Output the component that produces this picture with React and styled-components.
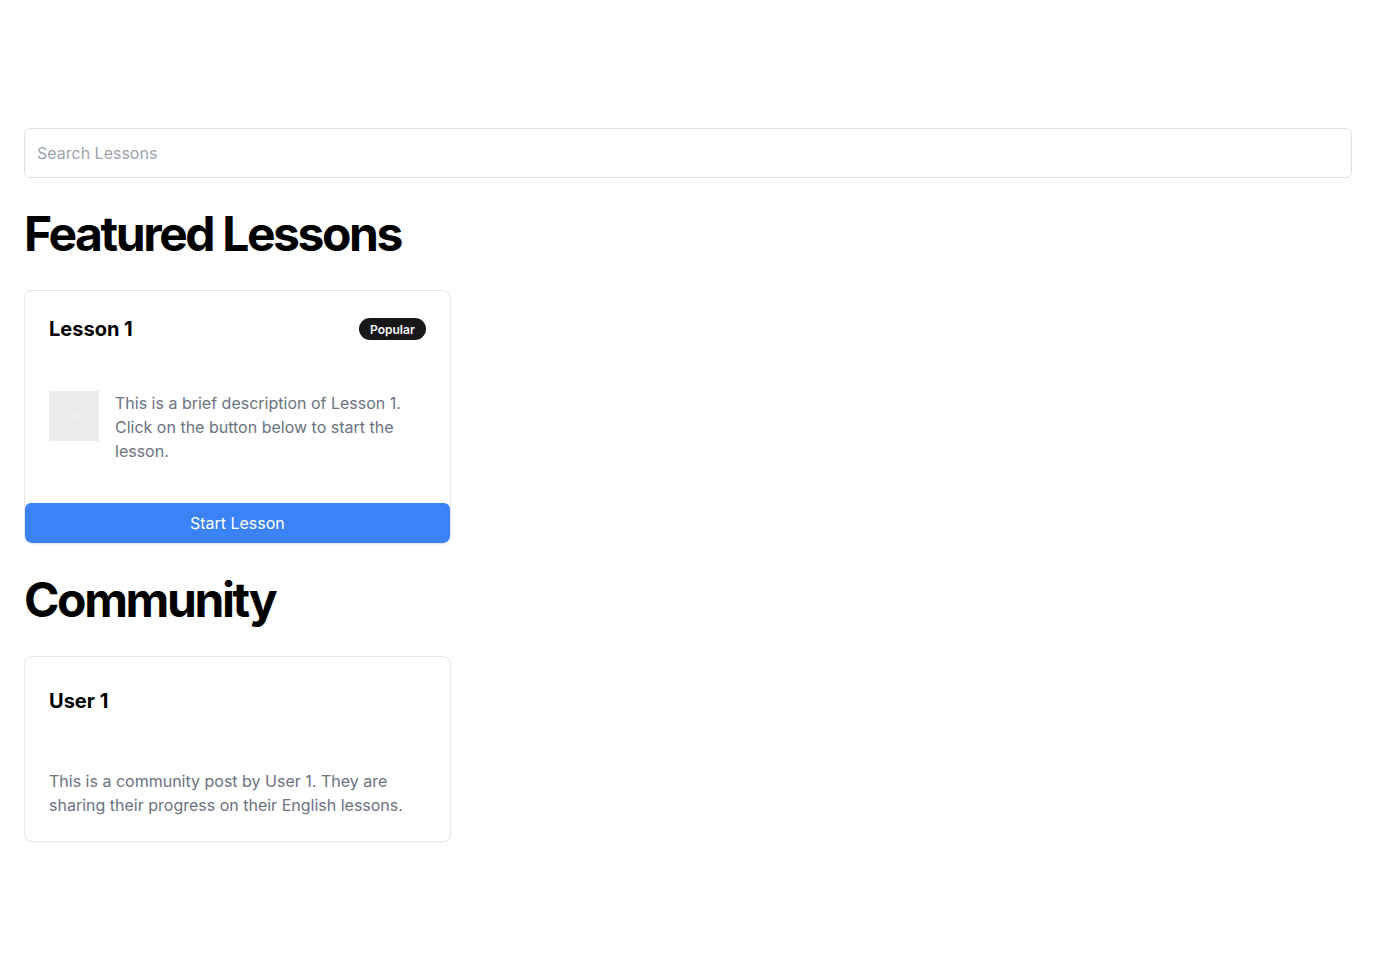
import React from "react";
import styled, { createGlobalStyle } from "styled-components";

const GlobalStyle = createGlobalStyle`
  * { box-sizing: border-box; }
  body {
    margin: 0;
    background: #ffffff;
    font-family: Inter, "Noto Sans", sans-serif;
    color: #09090b;
  }
`;

const lessons = [
  {
    title: "Lesson 1",
    badge: "Popular",
    text: "This is a brief description of Lesson 1. Click on the button below to start the lesson.",
  },
];

const posts = [
  {
    user: "User 1",
    text: "This is a community post by User 1. They are sharing their progress on their English lessons.",
  },
];

export default function App() {
  return (
    <>
      <GlobalStyle />
      <Page>
        <SearchInput placeholder="Search Lessons" />

        <Heading>Featured Lessons</Heading>
        <CardGrid>
          {lessons.map((lesson) => (
            <Card key={lesson.title}>
              <CardHeader>
                <TitleRow>
                  <CardTitle>{lesson.title}</CardTitle>
                  <Badge>{lesson.badge}</Badge>
                </TitleRow>
              </CardHeader>
              <CardContent>
                <LessonBody>
                  <Thumb />
                  <Description>{lesson.text}</Description>
                </LessonBody>
              </CardContent>
              <StartButton>Start Lesson</StartButton>
            </Card>
          ))}
        </CardGrid>

        <Heading>Community</Heading>
        <CardGrid>
          {posts.map((post) => (
            <Card key={post.user}>
              <CardHeader>
                <UserRow>
                  <CardTitle>{post.user}</CardTitle>
                </UserRow>
              </CardHeader>
              <CardContent>
                <Description>{post.text}</Description>
              </CardContent>
            </Card>
          ))}
        </CardGrid>
      </Page>
    </>
  );
}

const Page = styled.main`
  padding: 128px 24px 24px;
`;

const SearchInput = styled.input`
  display: block;
  width: 100%;
  height: 50px;
  padding: 12px;
  border: 1px solid #e0e0e0;
  border-radius: 6px;
  font-family: inherit;
  font-size: 16px;
  line-height: 24px;
  color: #09090b;
  outline: none;

  &::placeholder {
    color: #9ca3af;
  }
`;

const Heading = styled.h2`
  margin: 32px 0 32px;
  font-size: 48px;
  line-height: 48px;
  font-weight: 700;
  letter-spacing: -0.05em;
  color: #000;
`;

const CardGrid = styled.div`
  display: grid;
  grid-template-columns: repeat(3, 1fr);
  gap: 24px;
`;

const Card = styled.div`
  display: flex;
  flex-direction: column;
  border: 1px solid #e5e7eb;
  border-radius: 8px;
  background: #fff;
  box-shadow: 0 1px 2px rgba(0, 0, 0, 0.04);
  overflow: hidden;
`;

const CardHeader = styled.div`
  padding: 24px;
`;

const TitleRow = styled.div`
  display: flex;
  align-items: center;
  justify-content: space-between;
  height: 28px;
`;

const UserRow = styled.div`
  display: flex;
  align-items: center;
  height: 40px;
`;

const CardTitle = styled.h3`
  margin: 0;
  font-size: 20px;
  line-height: 28px;
  font-weight: 700;
  color: #000;
`;

const Badge = styled.span`
  display: inline-flex;
  align-items: center;
  height: 22px;
  padding: 0 10px;
  border: 1px solid transparent;
  border-radius: 999px;
  background: #18181b;
  color: #fafafa;
  font-size: 12px;
  font-weight: 600;
`;

const CardContent = styled.div`
  padding: 24px;
`;

const LessonBody = styled.div`
  display: flex;
  align-items: flex-start;
  gap: 16px;
`;

const Thumb = styled.div`
  flex: none;
  position: relative;
  width: 50px;
  height: 50px;
  background: #ebebeb;

  &::after {
    content: "";
    position: absolute;
    left: 21px;
    top: 21px;
    width: 8px;
    height: 8px;
    border-radius: 50%;
    background: #f1f1f1;
    filter: blur(2px);
  }
`;

const Description = styled.p`
  margin: 0;
  font-size: 16px;
  line-height: 24px;
  color: #6b7280;
`;

const StartButton = styled.button`
  margin-top: 16px;
  width: 100%;
  height: 40px;
  border: none;
  border-radius: 6px;
  background: #3b82f6;
  color: #fff;
  font-family: inherit;
  font-size: 16px;
  cursor: pointer;
`;
